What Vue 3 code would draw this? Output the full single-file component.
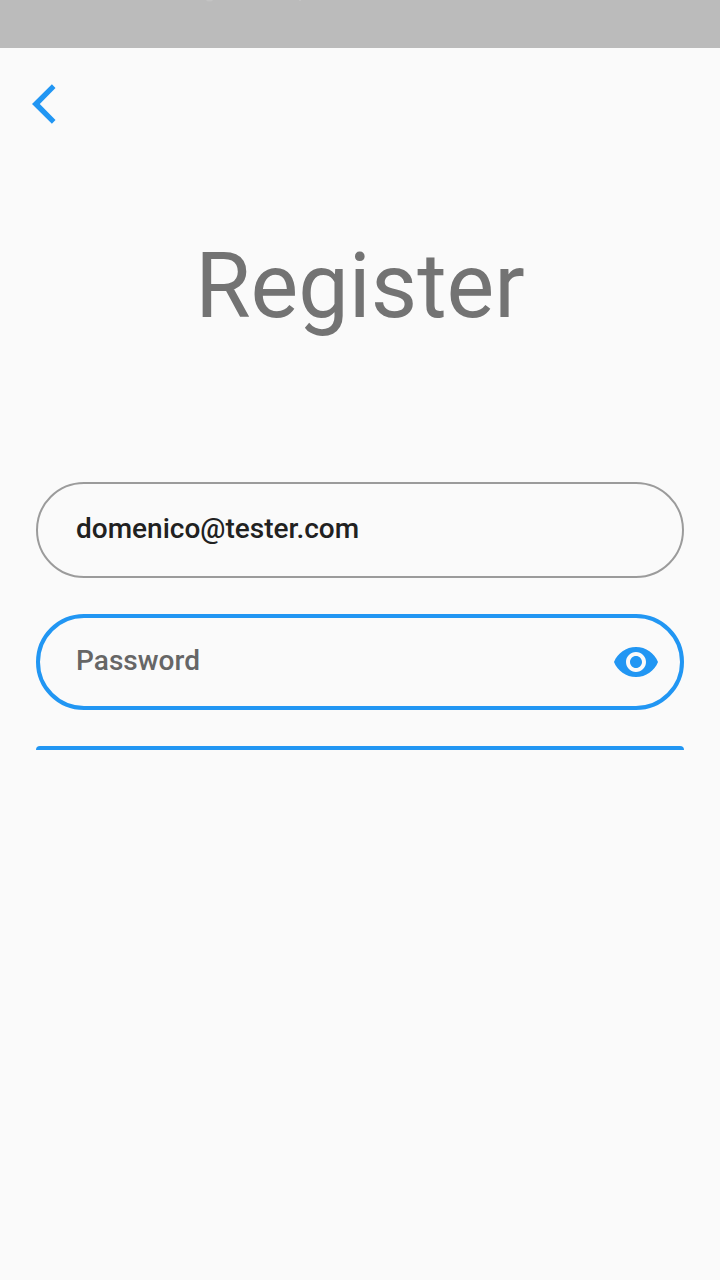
<script setup>
import { ref } from 'vue'
const email = ref('domenico@tester.com')
</script>

<template>
  <main class="screen">
    <div class="status">
      <svg class="marks" width="720" height="3" viewBox="0 0 720 3"><path d="M206 0h7q-.5 1.500-3.500 1.500T206 0M299 0h2v1h-2z" /></svg>
    </div>
    <header class="bar">
      <svg class="back" width="48" height="48" viewBox="0 0 24 24"><path d="M11.75 4.05L9.95 2.1 0 12l9.95 9.9 1.8-1.95L3.9 12z" /></svg>
    </header>
    <h1 class="title">Register</h1>
    <div class="field"><span class="value">{{ email }}</span></div>
    <div class="field focused">
      <span class="hint">Password</span>
      <svg class="eye" width="48" height="48" viewBox="0 0 24 24"><path d="M12 4.5C7 4.5 2.73 7.61 1 12c1.73 4.39 6 7.5 11 7.5s9.270-3.110 11-7.500c-1.730-4.390-6-7.500-11-7.500zM12 17c-2.760 0-5-2.240-5-5s2.240-5 5-5 5 2.240 5 5-2.240 5-5 5zm0-8c-1.660 0-3 1.340-3 3s1.340 3 3 3 3-1.340 3-3-1.340-3-3-3z" /></svg>
    </div>
    <div class="line"></div>
  </main>
</template>

<style>
html, body { margin: 0; background: #fafafa; }
</style>

<style scoped>
.screen { height: 1280px; overflow: hidden; background: #fafafa; font-family: Roboto, sans-serif; }
.status { height: 48px; background: #bbb; }
.bar { height: 112px; display: flex; align-items: center; padding-left: 32px; box-sizing: border-box; }
svg { display: block; fill: #2196f3; }
.marks { fill: #c3c3c3; }
.title { margin: 74px 0 0; height: 104px; line-height: 106px; font-size: 90px; font-weight: 400; text-align: center; color: #737373; }
.field { display: flex; align-items: center; justify-content: space-between; box-sizing: border-box; height: 96px; margin: 144px 36px 0; padding: 0 22px 2px 38px; border: 2px solid #9b9b9b; border-radius: 48px; font-size: 28px; font-weight: 500; line-height: 32px; color: #212121; }
.field.focused { margin-top: 36px; border: 4px solid #2196f3; padding: 0 20px 0 36px; }
.hint { color: #666; margin-top: -2px; letter-spacing: 0.04px; }
.line { height: 4px; margin: 36px 36px 0; background: #2196f3; border-radius: 4px 4px 0 0; }
</style>
